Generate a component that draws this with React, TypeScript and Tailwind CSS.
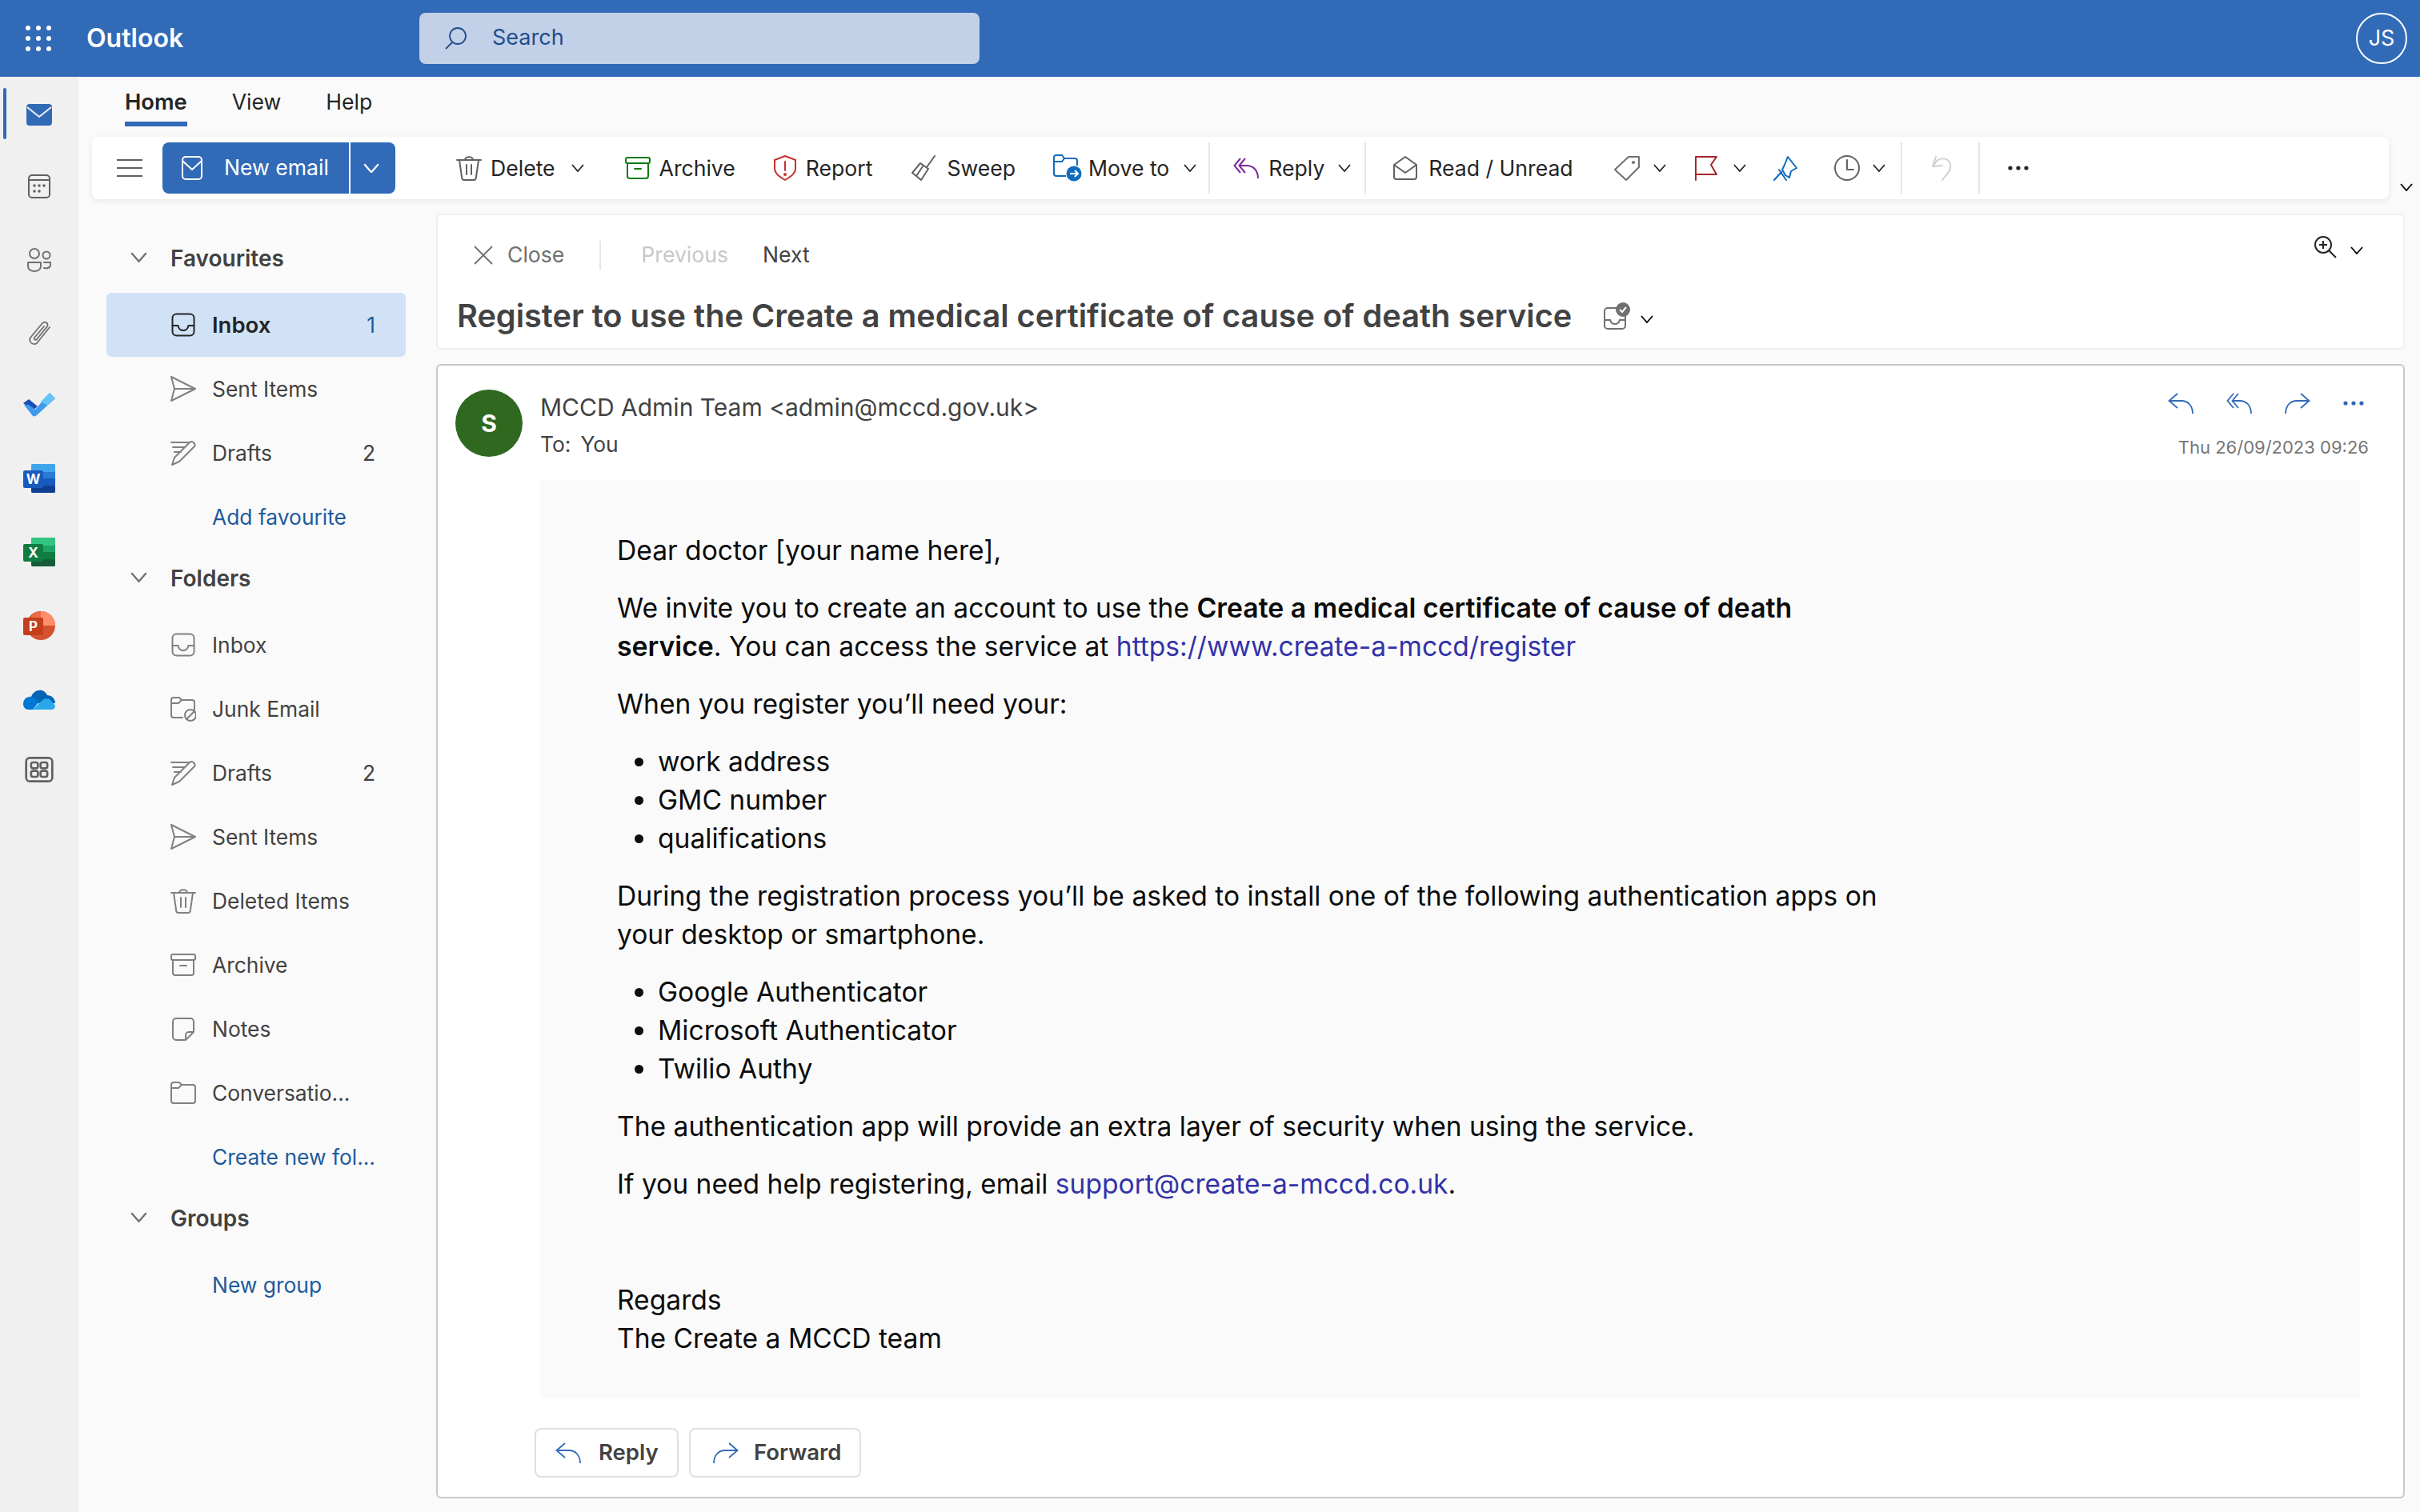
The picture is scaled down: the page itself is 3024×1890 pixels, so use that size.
import React from "react";

type IconProps = { className?: string; size?: number; sw?: number; children: React.ReactNode };

const Ic: React.FC<IconProps> = ({ className, size = 32, sw = 2, children }) => (
  <svg
    width={size}
    height={size}
    viewBox="0 0 32 32"
    fill="none"
    stroke="currentColor"
    strokeWidth={sw}
    strokeLinecap="round"
    strokeLinejoin="round"
    className={`shrink-0 ${className ?? ""}`}
  >
    {children}
  </svg>
);

const Chevron = ({ className = "text-[#242424]", w = 16 }: { className?: string; w?: number }) => (
  <svg width={w} height={(w * 10) / 16} viewBox="0 0 16 10" fill="none" stroke="currentColor" strokeWidth={1.8} className={`shrink-0 ${className}`}>
    <path d="M1 1l7 8 7-8" />
  </svg>
);

const Dots = ({ className }: { className?: string }) => (
  <svg width="26" height="6" viewBox="0 0 26 6" fill="currentColor" className={`shrink-0 ${className}`}>
    <circle cx="3" cy="3" r="2.6" />
    <circle cx="13" cy="3" r="2.6" />
    <circle cx="23" cy="3" r="2.6" />
  </svg>
);

const Arrow = ({ className, children }: { className?: string; children: React.ReactNode }) => (
  <svg width="32" height="26" viewBox="0 0 32 26" fill="none" stroke="currentColor" strokeWidth="1.8" className={`shrink-0 ${className ?? ""}`}>
    {children}
  </svg>
);

const ReplyIcon = ({ className }: { className?: string }) => (
  <Arrow className={className}>
    <path d="M12 1L1.5 10 12 19M1.5 10H17c8 0 14 6 14 16" />
  </Arrow>
);

const ReplyAllIcon = ({ className }: { className?: string }) => (
  <Arrow className={className}>
    <path d="M9 1L1.5 10 9 19M15 1L7.5 10 15 19M7.5 10H17c8 0 14 6 14 16" />
  </Arrow>
);

const ForwardIcon = ({ className }: { className?: string }) => (
  <Arrow className={className}>
    <path d="M20 1l10.5 9L20 19M30.5 10H15C7 10 1 16 1 26" />
  </Arrow>
);

const MailIcon = ({ className }: { className?: string }) => (
  <Ic className={className}>
    <rect x="4" y="2" width="24" height="28" rx="4" />
    <path d="M4 7l12 11L28 7" />
  </Ic>
);

const InboxIcon = ({ className = "text-[#808080]" }: { className?: string }) => (
  <Ic className={className}>
    <rect x="2.5" y="2.5" width="27" height="27" rx="5" />
    <path d="M2.5 17h7c1 5 3 6 6.500 6s5.500-1 6.500-6h7" />
  </Ic>
);
const SentIcon = () => (
  <Ic className="text-[#808080]">
    <path d="M1 1l30 15L1 31l4-15zM5 16h26" />
  </Ic>
);
const DraftIcon = () => (
  <Ic className="text-[#808080]">
    <path d="M1 3h22M3 9h14M5 15h8" />
    <path d="M2 31l3-9L24 3c3-3 8 2 6 5L11 27z" />
  </Ic>
);
const JunkIcon = () => (
  <Ic className="text-[#808080]">
    <path d="M15 27H4a3 3 0 01-3-3V5a3 3 0 013-3h7l3 3h13a3 3 0 013 3v9" />
    <path d="M1 9h9l4-4" />
    <circle cx="25" cy="24" r="7" />
    <path d="M20 29l10-10" />
  </Ic>
);
const TrashIcon = ({ className = "text-[#808080]" }: { className?: string }) => (
  <Ic className={className}>
    <path d="M1 6h30M11 6c0-5 10-5 10 0M4 6l3 21c0 2 1 4 3 4h12c2 0 3-2 3-4l3-21M13 12v12M19 12v12" />
  </Ic>
);
const ArchiveIcon = ({ className = "text-[#808080]" }: { className?: string }) => (
  <Ic className={className}>
    <rect x="1" y="3" width="30" height="7" rx="2" />
    <path d="M3 10v16a3 3 0 003 3h20a3 3 0 003-3V10M12 17h8" />
  </Ic>
);
const NotesIcon = () => (
  <Ic className="text-[#808080]">
    <path d="M19 30H7a4 4 0 01-4-4V7a4 4 0 014-4h18a4 4 0 014 4v13zM19 30v-6a4 4 0 014-4h6" />
  </Ic>
);
const FolderIcon = () => (
  <Ic className="text-[#808080]">
    <path d="M1 6a3 3 0 013-3h7l3 3h14a3 3 0 013 3v17a3 3 0 01-3 3H4a3 3 0 01-3-3zM1 10h9l4-4" />
  </Ic>
);

const railIcons: React.ReactNode[] = [
  <svg width="32" height="28" viewBox="0 0 32 28" className="text-[#316ab7]" key="mail">
    <path fill="currentColor" d="M0 5a4 4 0 014-4h24a4 4 0 014 4v19a4 4 0 01-4 4H4a4 4 0 01-4-4z" />
    <path d="M1 5l15 12L31 5" fill="none" stroke="#f0f0f0" strokeWidth="2" />
  </svg>,
  <Ic className="text-[#616161] -mt-0.5" key="cal">
    <rect x="3" y="2" width="26" height="28" rx="4" />
    <path d="M3 8h26" />
    <g fill="currentColor" stroke="none">
      <circle cx="10" cy="15" r="1.800" />
      <circle cx="16" cy="15" r="1.800" />
      <circle cx="22" cy="15" r="1.800" />
      <circle cx="10" cy="22" r="1.800" />
      <circle cx="16" cy="22" r="1.800" />
    </g>
  </Ic>,
  <Ic className="text-[#707070]" key="people">
    <circle cx="10" cy="8" r="6" />
    <circle cx="25" cy="10" r="4.500" />
    <path d="M2 19h16v5c0 4-4 6-8 6s-8-2-8-6zM22 19h8v3c0 3-3 5-8 4" />
  </Ic>,
  <Ic className="text-[#707070]" key="clip" sw={1.8}>
    <path d="M29 9L13 29c-4 3-11-1-8-7L20 4c3-3 8 0 6 4L13 24c-2 2-4 0-3-2L22 8" />
  </Ic>,
  <svg width="40" height="32" viewBox="0 0 40 32" className="-mt-0.5" key="todo">
    <path fill="#1b4fb5" d="M0 14l7-5 11 9-6 5z" />
    <path fill="#3f9bef" d="M12 30L1 16l6 0 8 6L33 1l7 7-22 20c-2 2-4 3-6 2z" />
    <path fill="#66c3f7" d="M22 12L33 1l7 7-10 9z" />
  </svg>,
  <svg width="40" height="36" viewBox="0 0 40 36" key="word">
    <rect x="10" width="30" height="36" rx="2" fill="#2b7cd3" />
    <rect x="10" width="30" height="10" rx="2" fill="#41a5ee" />
    <rect x="10" y="18" width="30" height="9" fill="#185abd" />
    <rect x="10" y="27" width="30" height="9" rx="2" fill="#103f91" />
    <rect y="8" width="25" height="22" rx="2" fill="#185abd" />
    <text x="12.500" y="25" textAnchor="middle" fontFamily="Inter, sans-serif" fontWeight="700" fontSize="17" fill="#fff">W</text>
  </svg>,
  <svg width="40" height="36" viewBox="0 0 40 36" className="mt-0.5" key="excel">
    <rect x="10" width="30" height="36" rx="2" fill="#21a366" />
    <rect x="10" width="30" height="10" rx="2" fill="#33c481" />
    <rect x="10" y="18" width="30" height="9" fill="#107c41" />
    <rect x="10" y="27" width="30" height="9" rx="2" fill="#185c37" />
    <rect y="8" width="25" height="22" rx="2" fill="#107c41" />
    <text x="12.500" y="25" textAnchor="middle" fontFamily="Inter, sans-serif" fontWeight="700" fontSize="17" fill="#fff">X</text>
  </svg>,
  <svg width="40" height="36" viewBox="0 0 40 36" className="mt-1" key="ppt">
    <ellipse cx="22" cy="18" rx="18" ry="18" fill="#d35230" />
    <path d="M22 0a18 18 0 0118 18H22z" fill="#ff8f6b" />
    <path d="M22 0v18H6A18 18 0 0122 0z" fill="#ed6c47" />
    <rect y="8" width="25" height="22" rx="2" fill="#c43e1c" />
    <text x="12.500" y="25" textAnchor="middle" fontFamily="Inter, sans-serif" fontWeight="700" fontSize="17" fill="#fff">P</text>
  </svg>,
  <svg width="40" height="26" viewBox="0 0 40 26" className="mt-1.5" key="drive">
    <path fill="#0364b8" d="M10 10C13 1 25-2 30 8c5 0 10 4 10 10H6z" />
    <path fill="#0078d4" d="M0 19c0-6 5-10 11-9l9 6-8 10H6c-3 0-6-3-6-7z" />
    <path fill="#28a8ea" d="M12 26l12-12c3-2 6-2 9-1l7 8c0 3-2 5-5 5z" />
  </svg>,
  <Ic className="text-[#616161]" size={36} sw={2.4} key="apps">
    <rect x="1.500" y="3" width="29" height="26" rx="4" />
    <rect x="7" y="8" width="7.500" height="6.500" rx="2" />
    <rect x="17.500" y="8" width="7.500" height="6.500" rx="2" />
    <rect x="7" y="17.500" width="7.500" height="6.500" rx="2" />
    <rect x="17.500" y="17.500" width="7.500" height="6.500" rx="2" />
  </Ic>,
];

const Rail = () => (
  <div className="w-[98px] shrink-0 bg-[#f0f0f0] pt-px relative">
    <div className="absolute left-1 top-[14px] w-1 h-16 rounded-full bg-[#316ab7]" />
    {railIcons.map((icon, i) => (
      <div key={i} className="h-[91px] flex items-center justify-center">
        {icon}
      </div>
    ))}
  </div>
);

const Header = () => (
  <header className="h-24 shrink-0 bg-[#316ab7] flex items-center text-white relative">
    <svg width="32" height="32" viewBox="0 0 32 32" fill="currentColor" className="ml-8">
      {[3, 16, 29].map((y) =>
        [3, 16, 29].map((x) => <circle key={`${x}-${y}`} cx={x} cy={y} r="3" />),
      )}
    </svg>
    <span className="ml-11 w-[120px] text-[32px] font-semibold">Outlook</span>
    <div className="ml-[296px] w-[700px] h-16 rounded-lg bg-[#c2d1e8] flex items-center text-[#1f4e8c]">
      <svg width="28" height="28" viewBox="0 0 28 28" fill="none" stroke="currentColor" strokeWidth="1.8" className="ml-[31px]">
        <ellipse cx="17" cy="11" rx="10" ry="10" />
        <path d="M10 19l-8 8" />
      </svg>
      <span className="ml-[32px] text-[27px] -mt-0.5">Search</span>
    </div>
    <div className="ml-auto mr-4 w-16 h-16 rounded-full border-2 border-white flex items-center justify-center text-[27px]">JS</div>
  </header>
);

const Tabs = () => (
  <div className="h-[75px] pl-[58px] flex gap-[56px] text-[26.6px] text-[#242424]">
    <div className="pt-3 h-[62px] font-semibold text-[27.3px] border-b-[6px] border-[#316ab7]">Home</div>
    <div className="pt-3">View</div>
    <div className="pt-3">Help</div>
  </div>
);

const Sep = ({ ml }: { ml: string }) => <div className={`w-0.5 h-16 bg-[#e6e6e6] shrink-0 ${ml}`} />;

const Toolbar = () => (
  <div className="flex items-end">
    <div className="ml-[17px] w-[2870px] h-[78px] rounded-lg bg-white shadow-[0_2px_8px_rgba(0,0,0,0.08)] flex items-center text-[26.6px] text-[#242424] [&>span]:mt-0.5">
      <svg width="34" height="24" viewBox="0 0 34 24" stroke="#616161" strokeWidth="2" className="ml-[30px] shrink-0">
        <path d="M1 2h32M1 12h32M1 22h32" />
      </svg>
      <div className="ml-6 w-[291px] h-16 rounded-lg bg-[#316ab7] text-white flex items-center shrink-0">
        <div className="w-[235px] h-full flex items-center border-r-2 border-white">
          <MailIcon className="ml-[21px]" />
          <span className="ml-[24px]">New email</span>
        </div>
        <Chevron className="ml-4 text-white" w={20} />
      </div>
      <TrashIcon className="ml-[76px] text-[#616161]" />
      <span className="ml-[11px]">Delete</span>
      <Chevron className="ml-[20px]" />
      <ArchiveIcon className="ml-[51px] text-[#107c10]" />
      <span className="ml-[11px]">Archive</span>
      <Ic className="ml-[46px] text-[#c4312b]">
        <path d="M16 1l13 5v10c0 7-6 11-13 15C9 27 3 23 3 16V6zM16 8v11" />
        <circle cx="16" cy="24" r="1" fill="currentColor" />
      </Ic>
      <span className="ml-[10px]">Report</span>
      <Ic className="ml-[47px] text-[#616161]">
        <path d="M31 1L21 15M13 10l10 7-9 14L3 22zM8 26l8-12" />
      </Ic>
      <span className="ml-[14px]">Sweep</span>
      <svg width="36" height="34" viewBox="0 0 36 34" fill="none" stroke="#0f6cbd" strokeWidth="2" className="ml-[47px] shrink-0">
        <path d="M16 27H4a3 3 0 01-3-3V4a3 3 0 013-3h7l3 4h13a3 3 0 013 3v6M1 9h10l3-4" />
        <circle cx="26" cy="24" r="9.500" fill="#0f6cbd" stroke="none" />
        <path d="M21 24h10M27 20l4 4-4 4" stroke="#fff" />
      </svg>
      <span className="ml-[8px]">Move to</span>
      <Chevron className="ml-[18px]" />
      <Sep ml="ml-[15px]" />
      <svg width="32" height="26" viewBox="0 0 32 26" fill="none" stroke="#7a2a9e" strokeWidth="2" className="ml-[29px] shrink-0">
        <path d="M9 1L1.500 10 9 19M15 1L7.500 10 15 19M7.500 10H17c8 0 14 6 14 16" />
      </svg>
      <span className="ml-[12px]">Reply</span>
      <Chevron className="ml-[17px]" />
      <Sep ml="ml-[17px]" />
      <Ic className="ml-[33px] text-[#616161]">
        <path d="M2 12L16 2l14 10v15a3 3 0 01-3 3H5a3 3 0 01-3-3zM2 12l14 10 14-10" />
      </Ic>
      <span className="ml-[13px]">Read / Unread</span>
      <Ic className="ml-[51px] text-[#707070]">
        <path d="M31 2v13L15 31 1 18 18 2zM1 18" />
        <circle cx="24" cy="9" r="1" fill="currentColor" />
      </Ic>
      <Chevron className="ml-[17px]" />
      <Ic className="ml-[32px] text-[#a4262c]">
        <path d="M5 31V2h26l-7 10 7 12H5" />
      </Ic>
      <Chevron className="ml-[20px]" />
      <Ic className="ml-[33px] text-[#0f6cbd]">
        <path d="M19 2l11 14-7 4-2 8-5-3-4-7 3-6zM2 31l9-10M8 18l9 13" />
      </Ic>
      <Ic className="ml-[45px] text-[#616161]">
        <circle cx="16" cy="16" r="15" />
        <path d="M16 6v12h8" />
      </Ic>
      <Chevron className="ml-4" />
      <Sep ml="ml-[19px]" />
      <Ic className="ml-[32px] text-[#d1d1d1]">
        <path d="M10 2L6 14l12-1M7 13c6-14 24-10 21 3-1 6-6 10-10 15" />
      </Ic>
      <Sep ml="ml-[31px]" />
      <Dots className="ml-[35px] text-[#242424]" />
    </div>
    <Chevron className="ml-[14px] mb-[10px]" />
  </div>
);

type NavRow = { label: string; icon?: React.ReactNode; count?: string; link?: boolean; active?: boolean };

const NavItem = ({ label, icon, count, link, active }: NavRow) => (
  <div
    className={`h-20 flex items-center rounded-md pl-20 pr-[38px] ${
      active ? "text-[27.5px] bg-[#d1e2f7] font-semibold text-[#242424]" : link ? "text-[26.4px] text-[#1f5a9a]" : "text-[26.4px] text-[#424242]"
    }`}
  >
    <div className="w-8 h-8 flex items-center justify-center shrink-0">{icon}</div>
    <span className="ml-5 whitespace-nowrap pt-px">{label}</span>
    {count && <span className={`ml-auto font-normal text-[26.4px] pt-px ${active ? "text-[#1f5a9a]" : ""}`}>{count}</span>}
  </div>
);

const NavGroup = ({ title, rows }: { title: string; rows: NavRow[] }) => (
  <div>
    <div className="h-[72px] pl-[30px] flex items-center text-[28px] font-semibold text-[#424242]">
      <Chevron className="text-[#707070]" w={21} />
      <span className="ml-[29px] pt-px">{title}</span>
    </div>
    <div className="mt-2">
      {rows.map((r) => (
        <NavItem key={r.label + (r.icon ? "i" : "")} {...r} />
      ))}
    </div>
  </div>
);

const Sidebar = () => (
  <nav className="w-[447px] shrink-0 pt-[37px] pl-[35px] pr-[38px]">
    <NavGroup
      title="Favourites"
      rows={[
        { label: "Inbox", icon: <InboxIcon className="text-[#242424]" />, count: "1", active: true },
        { label: "Sent Items", icon: <SentIcon /> },
        { label: "Drafts", icon: <DraftIcon />, count: "2" },
        { label: "Add favourite", link: true },
      ]}
    />
    <NavGroup
      title="Folders"
      rows={[
        { label: "Inbox", icon: <InboxIcon /> },
        { label: "Junk Email", icon: <JunkIcon /> },
        { label: "Drafts", icon: <DraftIcon />, count: "2" },
        { label: "Sent Items", icon: <SentIcon /> },
        { label: "Deleted Items", icon: <TrashIcon /> },
        { label: "Archive", icon: <ArchiveIcon /> },
        { label: "Notes", icon: <NotesIcon /> },
        { label: "Conversatio...", icon: <FolderIcon /> },
        { label: "Create new fol...", link: true },
      ]}
    />
    <NavGroup title="Groups" rows={[{ label: "New group", link: true }]} />
  </nav>
);

const SubjectCard = () => (
  <div className="h-[170px] shrink-0 rounded-md border-2 border-[#f0f0f0] bg-white pl-[25px] pr-[50px] relative">
    <div className="h-[96px] flex items-center pl-5 text-[26.6px] pt-1">
      <svg width="24" height="24" viewBox="0 0 24 24" stroke="#707070" strokeWidth="1.8" className="shrink-0">
        <path d="M1 1l22 22M23 1L1 23" />
      </svg>
      <span className="ml-[18px] text-[#707070]">Close</span>
      <div className="ml-[44px] w-0.5 h-9 bg-[#e6e6e6]" />
      <span className="ml-[50px] text-[#c8c8c8]">Previous</span>
      <span className="ml-[43px] text-[#424242]">Next</span>
      <div className="ml-auto flex items-center -mt-5">
        <svg width="28" height="28" viewBox="0 0 28 28" fill="none" stroke="#242424" strokeWidth="2">
          <circle cx="11" cy="11" r="10" />
          <path d="M6 11h10M11 6v10M18 18l9 9" />
        </svg>
        <Chevron className="ml-[17px] mt-2" />
      </div>
    </div>
    <div className="flex items-center pt-0.5">
      <h1 className="text-[39.7px] font-semibold text-[#424242] whitespace-nowrap leading-[56px] -ml-px">
        Register to use the Create a medical certificate of cause of death service
      </h1>
      <svg width="34" height="36" viewBox="0 0 34 36" fill="none" stroke="#707070" strokeWidth="2" className="ml-[40px] shrink-0">
        <rect x="1" y="8" width="26" height="26" rx="4" />
        <path d="M1 23h7c1 4 3 5 6 5s5-1 6-5h7" />
        <circle cx="24" cy="10" r="9" fill="#707070" stroke="none" />
        <path d="M20 10l3 3 5-6" stroke="#fff" />
      </svg>
      <Chevron className="ml-[12px] mt-2" />
    </div>
  </div>
);

const P = ({ children }: { children: React.ReactNode }) => <p className="mb-6">{children}</p>;

const Bullets = ({ items }: { items: string[] }) => (
  <ul className="list-disc pl-[51px] mb-6">
    {items.map((t) => (
      <li key={t}>{t}</li>
    ))}
  </ul>
);

const A = ({ children }: { children: React.ReactNode }) => <a className="text-[#3333a8]">{children}</a>;

const MessageCard = () => (
  <div className="flex-1 min-h-0 rounded-md border-2 border-[#c8c8c8] bg-white flex flex-col">
    <div className="flex pt-[30px] pl-[22px] h-[143px] shrink-0">
      <div className="w-[84px] h-[84px] rounded-full bg-[#2f6920] text-white font-bold text-[30px] flex items-center justify-center shrink-0">S</div>
      <div className="ml-[22px]">
        <div className="text-[30px] leading-10 mt-0.5 text-[#424242]">MCCD Admin Team &lt;admin@mccd.gov.uk&gt;</div>
        <div className="text-[26.4px] leading-9 mt-2 text-[#424242]">
          To:<span className="ml-3">You</span>
        </div>
      </div>
      <div className="ml-auto pr-[49px] flex flex-col items-end">
        <div className="flex items-center gap-[41px] text-[#316ab7] mt-1">
          <ReplyIcon />
          <ReplyAllIcon />
          <ForwardIcon />
          <Dots />
        </div>
        <div className="text-[22px] text-[#767676] mt-[26px] -mr-1.5">Thu 26/09/2023 09:26</div>
      </div>
    </div>
    <div className="ml-[128px] mr-[54px] h-[1148px] shrink-0 bg-[#fafafa] pl-24 pt-16 text-[33.6px] leading-[48px] text-[#0b0c0c]">
      <div className="max-w-[1600px]">
        <P>Dear doctor [your name here],</P>
        <P>
          We invite you to create an account to use the <b className="font-semibold text-[33.8px]">Create a medical certificate of cause of death service</b>. You can access the service at{" "}
          <A>https://www.create-a-mccd/register</A>
        </P>
        <P>When you register you’ll need your:</P>
        <Bullets items={["work address", "GMC number", "qualifications"]} />
        <P>During the registration process you’ll be asked to install one of the following authentication apps on your desktop or smartphone.</P>
        <Bullets items={["Google Authenticator", "Microsoft Authenticator", "Twilio Authy"]} />
        <P>The authentication app will provide an extra layer of security when using the service.</P>
        <P>
          If you need help registering, email <A>support@create-a-mccd.co.uk</A>.
        </P>
        <div className="mt-[97px]">Regards</div>
        <div>The Create a MCCD team</div>
      </div>
    </div>
    <div className="mt-[37px] ml-[121px] flex gap-[13px] text-[27.5px] font-semibold text-[#424242]">
      <div className="w-[180px] h-[62px] rounded-lg border-2 border-[#e0e0e0] flex items-center pl-6">
        <ReplyIcon className="text-[#316ab7]" />
        <span className="ml-[22px]">Reply</span>
      </div>
      <div className="w-[215px] h-[62px] rounded-lg border-2 border-[#e0e0e0] flex items-center pl-7">
        <ForwardIcon className="text-[#316ab7]" />
        <span className="ml-[19px]">Forward</span>
      </div>
    </div>
  </div>
);

export default function App() {
  return (
    <div className="w-[3024px] h-[1890px] overflow-hidden flex flex-col bg-[#fafafa] font-['Inter',sans-serif]">
      <Header />
      <div className="flex-1 min-h-0 flex">
        <Rail />
        <main className="flex-1 min-w-0 flex flex-col">
          <Tabs />
          <Toolbar />
          <div className="flex-1 min-h-0 flex">
            <Sidebar />
            <section className="flex-1 min-w-0 pt-[18px] pr-[19px] pb-[17px] flex flex-col gap-[18px]">
              <SubjectCard />
              <MessageCard />
            </section>
          </div>
        </main>
      </div>
    </div>
  );
}
